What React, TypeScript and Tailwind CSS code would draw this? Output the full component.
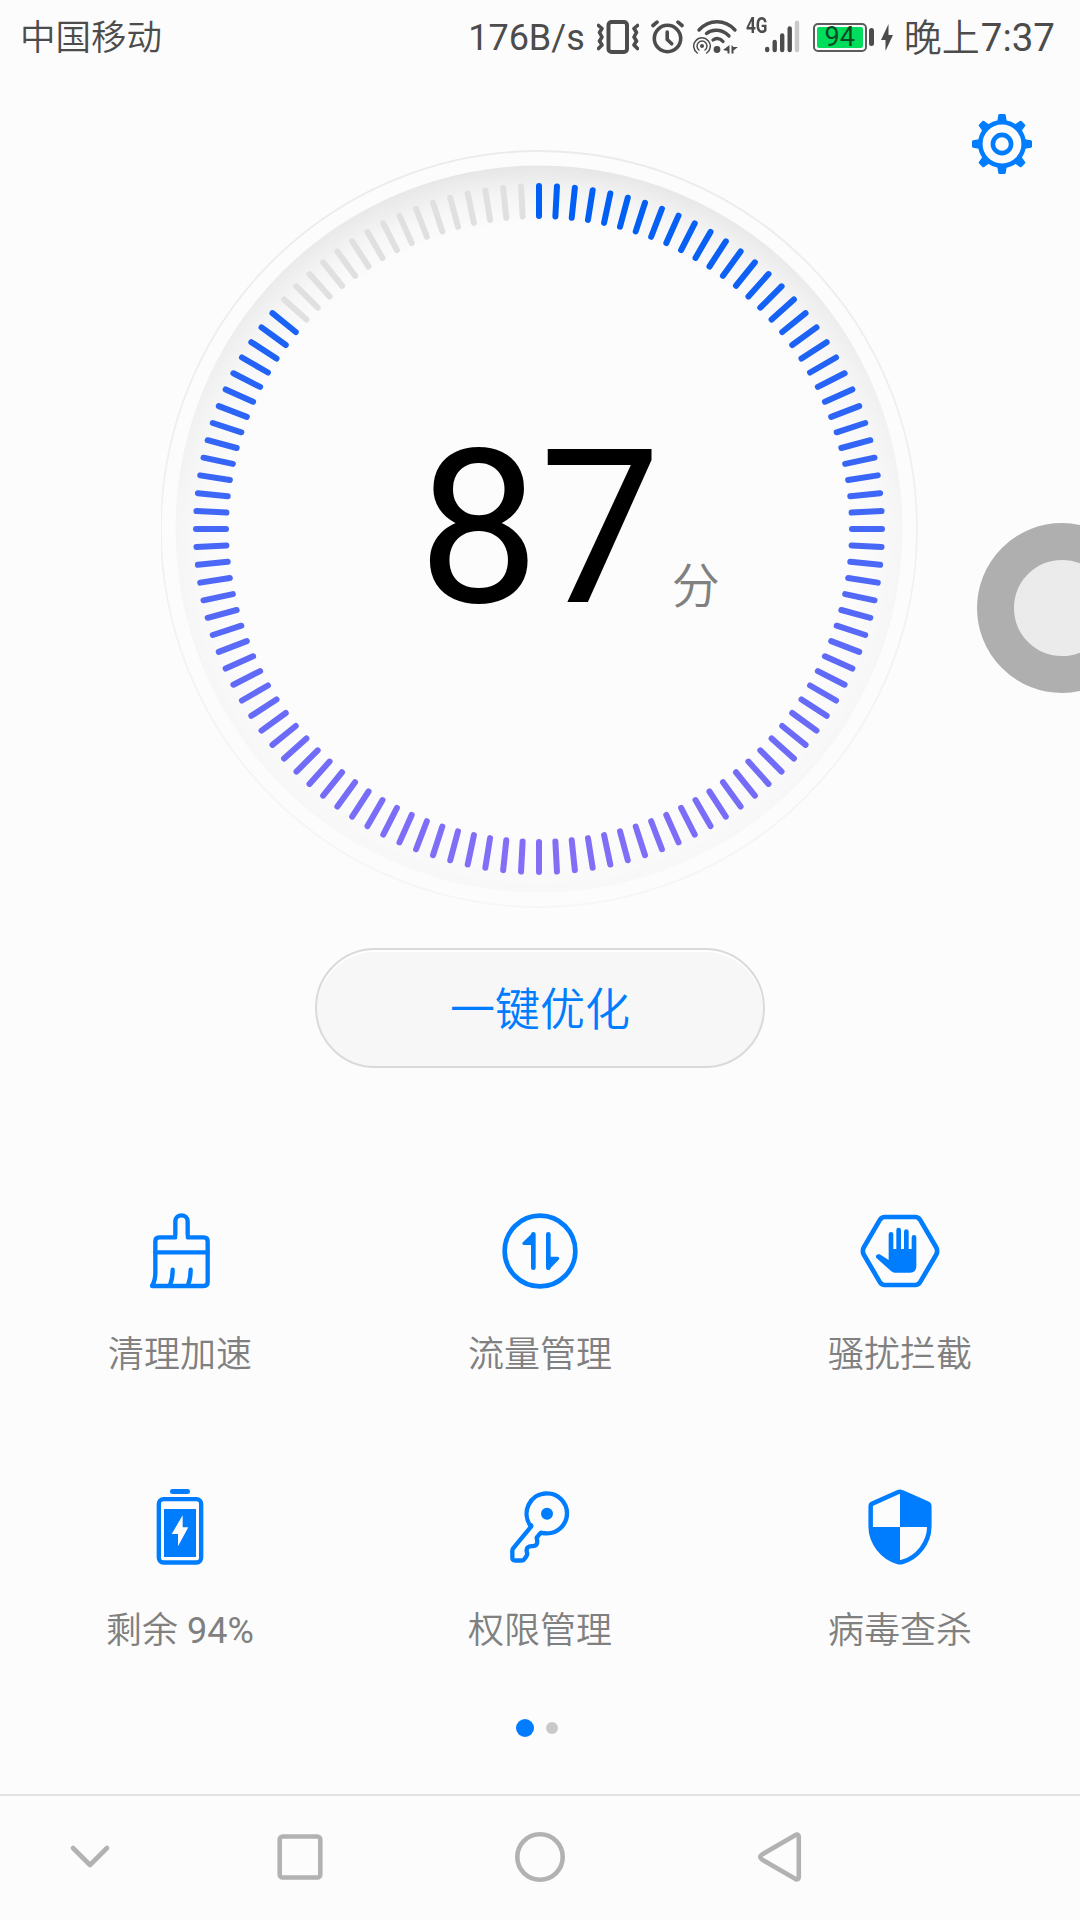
import type { ReactNode } from 'react';

const TICKS = 120;
const ACTIVE_TICKS = 104;

const BLUE = '#007dff';
const INK = '#4c4c4c';

function tickColor(index: number): string {
  // Vertical blend: blue on top, violet at the bottom
  const t = (1 - Math.cos((index * 2 * Math.PI) / TICKS)) / 2;
  const top = [0, 95, 244];
  const mid = [69, 103, 247];
  const bottom = [130, 110, 247];
  const [from, to, k] = t < 0.5 ? [top, mid, t * 2] : [mid, bottom, t * 2 - 1];
  const c = from.map((v, i) => Math.round(v + (to[i] - v) * k));
  return `rgb(${c[0]}, ${c[1]}, ${c[2]})`;
}

function VibrateIcon() {
  return (
    <svg className="ml-[12px] h-[34px] w-[42px]" viewBox="0 0 42 34" fill="none" stroke={INK}>
      <rect x="11.5" y="2" width="18.5" height="30" rx="3" strokeWidth="4" />
      <path d="M1.5 5.5l3.5 3-2.5 4 2.5 4.5-2.5 4 2.5 4-3.5 3.5" strokeWidth="3.6" strokeLinecap="round" strokeLinejoin="round" />
      <path d="M40.5 5.5l-3.5 3 2.5 4-2.5 4.5 2.5 4-2.5 4 3.5 3.5" strokeWidth="3.6" strokeLinecap="round" strokeLinejoin="round" />
    </svg>
  );
}

function AlarmIcon() {
  return (
    <svg className="ml-[12px] h-[34px] w-[33px]" viewBox="0 0 33 34" fill="none" stroke={INK} strokeLinecap="round" strokeLinejoin="round">
      <circle cx="16.5" cy="18.5" r="13.2" strokeWidth="3.6" />
      <path d="M16.2 12v7.5l4.5 4.3" strokeWidth="3.6" />
      <path d="M2 5.5L6 2.2M31 5.5L27 2.2" strokeWidth="3.6" />
    </svg>
  );
}

function WifiIcon() {
  return (
    <svg className="ml-[9px] h-[34px] w-[45px]" viewBox="0 0 45 34" fill="none" stroke={INK} strokeLinecap="round">
      <path d="M6 10C16 -1 32 -1 42 10" strokeWidth="3.4" />
      <path d="M13.5 13.5C19 8.8 29 8.8 36 16" strokeWidth="3.4" />
      <path d="M20 20c3-2.2 7-2 10 1.5" strokeWidth="3.4" />
      <circle cx="24" cy="29.5" r="3.4" fill={INK} stroke="none" />
      <circle cx="9" cy="26" r="2" fill={INK} stroke="none" />
      <path d="M6 30a5 5 0 1 1 6 0" strokeWidth="1.5" />
      <path d="M4.3 33a8.3 8.3 0 1 1 9.4 0" strokeWidth="1.5" />
      <path d="M36.5 25v8.500h-2v-2.500l-4.500-1zM38.500 25v8.500h2v-3l4.500-3.500h-4.500z" fill={INK} stroke="none" />
    </svg>
  );
}

function SignalIcon() {
  return (
    <svg className="h-[34px] w-[35px]" viewBox="0 0 35 34" strokeWidth="4.4" strokeLinecap="round">
      <path d="M2.2 29v1M9.7 22v8M17.2 15.5v14.5M24.7 8.5v21.5" stroke={INK} />
      <path d="M32 2.7v27.3" stroke="#c9c9c9" />
    </svg>
  );
}

function StatusBar() {
  return (
    <header className="flex h-[74px] items-center justify-between pr-[25px] pl-5 text-4xl leading-none text-[#4c4c4c]">
      <span className="pt-[4px] text-[35.5px] font-[350]">中国移动</span>
      <div className="flex items-center">
        <span className="pt-px">176B/s</span>
        <VibrateIcon />
        <AlarmIcon />
        <WifiIcon />
        <span className="mb-[22px] ml-[8px] w-[19px] origin-left scale-x-[0.78] text-[22px] font-bold leading-none">4G</span>
        <SignalIcon />
        <div className="ml-[13px] flex h-[29px] w-[54px] items-center justify-center rounded-[5px] border-2 border-[#5c5c5c] p-[2px]">
          <div className="flex h-full w-full items-center justify-center rounded-[2px] bg-[#00dc5c] text-[27px] leading-none text-[#0d4a24]">94</div>
        </div>
        <div className="ml-[2px] h-[18px] w-[5px] rounded-full bg-[#4c4c4c]" />
        <svg className="ml-[7px] h-[27px] w-[12px]" viewBox="0 0 12 27">
          <path d="M7.5 0v11H12L4.5 27V16H0z" fill={INK} />
        </svg>
        <span className="ml-[11px] pt-[2px] text-[38px] font-[350]">晚上</span>
        <span className="pt-[2px] pl-px text-[38.5px]">7:37</span>
      </div>
    </header>
  );
}

function GearIcon() {
  return (
    <svg className="h-[60px] w-[60px]" viewBox="-30 -30 60 60">
      {[0, 45, 90, 135, 180, 225, 270, 315].map((a) => (
        <path key={a} transform={`rotate(${a})`} d="M-6.5 -21L-4.7 -23L-3.7 -29Q-3.4 -30 -2.4 -30H2.4Q3.4 -30 3.7 -29L4.7 -23L6.5 -21z" fill={BLUE} />
      ))}
      <circle r="21.7" fill="none" stroke={BLUE} strokeWidth="4.6" />
      <circle r="9.1" fill="none" stroke={BLUE} strokeWidth="4.6" />
    </svg>
  );
}

function ScoreDial() {
  return (
    <div className="relative mx-auto h-[758px] w-[758px]">
      <svg className="h-full w-full" viewBox="-378 -379 758 758">
        <defs>
          <radialGradient id="rim" cx="0" cy="0" r="363.5" gradientUnits="userSpaceOnUse">
            <stop offset="0.84" stopColor="#000" stopOpacity="0" />
            <stop offset="0.92" stopColor="#000" stopOpacity="0.03" />
            <stop offset="1" stopColor="#000" stopOpacity="0.085" />
          </radialGradient>
          <linearGradient id="fade" x1="0" y1="-364" x2="0" y2="364" gradientUnits="userSpaceOnUse">
            <stop offset="0" stopColor="#fff" />
            <stop offset="0.5" stopColor="#fff" stopOpacity="0.3" />
            <stop offset="1" stopColor="#fff" stopOpacity="0.2" />
          </linearGradient>
          <linearGradient id="ring" x1="0" y1="-378" x2="0" y2="378" gradientUnits="userSpaceOnUse">
            <stop offset="0" stopColor="#ebebeb" />
            <stop offset="1" stopColor="#f6f6f6" />
          </linearGradient>
          <mask id="rimMask" maskUnits="userSpaceOnUse" x="-378" y="-378" width="757" height="757">
            <rect x="-378" y="-378" width="757" height="757" fill="url(#fade)" />
          </mask>
        </defs>
        <circle r="378" fill="none" stroke="url(#ring)" strokeWidth="1.8" />
        <circle r="363.5" fill="url(#rim)" mask="url(#rimMask)" />
        {Array.from({ length: TICKS }, (_, i) => (
          <line
            key={i}
            y1="-343"
            y2="-313"
            stroke={i < ACTIVE_TICKS ? tickColor(i) : '#e0e0e0'}
            strokeWidth="6"
            strokeLinecap="round"
            transform={`rotate(${(i * 360) / TICKS})`}
          />
        ))}
      </svg>
      <div className="absolute inset-0 flex items-baseline pt-[271px] pl-[257px]">
        <span className="text-[216px] leading-[216px] text-black">87</span>
        <span className="ml-[11px] translate-y-px text-[48px] leading-none font-[350] text-[#808080]">分</span>
      </div>
    </div>
  );
}

function BrushIcon() {
  return (
    <g fill="none" stroke={BLUE} strokeWidth="13" strokeLinecap="round" strokeLinejoin="round">
      <path d="M106 79V31c0-24 37-24 37 0v48h48q12 0 12 12v122q0 12-12 12H36c8-13 10-25 10-40V91q0-12 12-12z" />
      {/* The handle opens into the head */}
      <path d="M112.5 79h24" stroke="#fcfcfc" strokeLinecap="butt" />
      <path d="M46 124h157" />
      <path d="M98 176c0 18-1 28-7 43M152 176c0 18-1 28-7 43" />
    </g>
  );
}

function TrafficIcon() {
  return (
    <g fill="none" stroke={BLUE} strokeWidth="14" strokeLinecap="round" strokeLinejoin="round">
      <circle cx="120" cy="120" r="106" />
      <path d="M100 70v100M145 70v100" />
      <path d="M100 70L72 97h28zM145 171l28-29h-28z" strokeWidth="10" fill={BLUE} />
    </g>
  );
}

function BlockIcon() {
  return (
    <g>
      <path
        d="M74 18h92q9 0 14 8l48 82q7 12 0 24l-48 82q-5 8-14 8H74q-9 0-14-8l-48-82q-7-12 0-24l48-82q5-8 14-8z"
        fill="none"
        stroke={BLUE}
        strokeWidth="14"
      />
      <path
        d="M86 70q0-7 7-7t7 7v44h9V57q0-7 7-7t7 7v57h9V62q0-7 7-7t7 7v52h9V79q0-7 7-7t7 7v86q0 20-20 20h-44q-7 0-12-5L50 142q-4-4-1-9 4-5 10-3l27 17z"
        fill={BLUE}
      />
    </g>
  );
}

function PowerIcon() {
  return (
    <g>
      <rect x="90" y="6" width="60" height="15" rx="7" fill={BLUE} />
      <rect x="56.5" y="36.5" width="127" height="190" rx="14" fill="none" stroke={BLUE} strokeWidth="13" />
      <rect x="72" y="66" width="96" height="144" fill={BLUE} />
      <path d="M128 85v36h17l-31 57v-37H95z" fill="#fcfcfc" />
    </g>
  );
}

function KeyIcon() {
  return (
    <g>
      <path
        d="M93 119C62 77 89 19 141 19a60 60 0 0 1 0 120q-9 0-15-1.500-3-1-5 1l-9 11q-3 3-1 7 4 21-13 21-10-1-15 4-5 6-2 15 2 7-3 13l-6 8q-2 3-7 3H45q-8 0-8-8v-21q0-4 3-8l52-63q3-3 1-6z"
        fill="none"
        stroke={BLUE}
        strokeWidth="13"
        strokeLinejoin="round"
      />
      <circle cx="141" cy="80" r="18" fill={BLUE} />
    </g>
  );
}

function ShieldIcon() {
  return (
    <g>
      <path d="M120 13L204 50v70H120zM120 120v106C70 210 34 170 32 120z" fill={BLUE} />
      <path
        d="M115 15q5-2 10 0l78 35q5 2 5 8v60c0 50-36 94-82 107q-6 2-12 0C68 212 32 168 32 118V58q0-6 5-8z"
        fill="none"
        stroke={BLUE}
        strokeWidth="13.5"
        strokeLinejoin="round"
      />
    </g>
  );
}

interface Tool {
  label: string;
  value?: string;
  icon: ReactNode;
}

const TOOLS: Tool[] = [
  { label: '清理加速', icon: <BrushIcon /> },
  { label: '流量管理', icon: <TrafficIcon /> },
  { label: '骚扰拦截', icon: <BlockIcon /> },
  { label: '剩余', value: ' 94%', icon: <PowerIcon /> },
  { label: '权限管理', icon: <KeyIcon /> },
  { label: '病毒查杀', icon: <ShieldIcon /> },
];

function NavBar() {
  return (
    <nav className="flex h-[126px] items-center border-t-2 border-[#e2e2e2]">
      <svg className="h-[60px] w-[1080px]" viewBox="0 0 1080 60" fill="none" stroke="#b2b2b2" strokeWidth="4.6" strokeLinecap="round" strokeLinejoin="round">
        <path d="M73 20L90 37L107 20" />
        <rect x="279.7" y="8.5" width="40.6" height="41" rx="3" />
        <circle cx="540" cy="29" r="22.7" />
        <path d="M796 6.8L762 26.5Q758.5 29 762 31.5L796 51.2Q798.8 52 798.8 49V9Q798.8 6 796 6.8z" />
      </svg>
    </nav>
  );
}

export default function App() {
  return (
    <div className="relative flex h-[1920px] w-[1080px] flex-col overflow-hidden bg-[#fcfcfc] font-['Roboto','Noto_Sans_CJK_SC',sans-serif] font-normal">
      <StatusBar />
      <div className="flex h-[76px] justify-end pt-[40px] pr-[48px]">
        <GearIcon />
      </div>
      <ScoreDial />

      <button className="mx-auto mt-[40px] flex h-[120px] w-[450px] items-center justify-center rounded-full border-2 border-[#dadada] bg-[#f7f7f7] pt-[4px] text-[45px] leading-none font-[350] text-[#007dff] shadow-[inset_0_2px_1px_#ffffff]">
        一键优化
      </button>

      <main className="mt-[143px] grid grid-cols-3 gap-y-[116px]">
        {TOOLS.map((tool) => (
          <div key={tool.label} className="flex h-[160px] flex-col items-center">
            <svg className="h-[80px] w-[80px] overflow-visible" viewBox="0 0 240 240">
              {tool.icon}
            </svg>
            <div className="mt-[46px] text-4xl leading-none whitespace-pre text-[#808080]">
              <span className="font-[350]">{tool.label}</span>
              {tool.value}
            </div>
          </div>
        ))}
      </main>

      {/* Page indicator */}
      <div className="mt-[72px] flex h-[18px] items-center gap-3 pl-[516px]">
        <div className="h-[18px] w-[18px] rounded-full bg-[#007dff]" />
        <div className="h-3 w-3 rounded-full bg-[#c9c9c9]" />
      </div>

      <div className="mt-auto">
        <NavBar />
      </div>

      {/* Floating assistant button, half off the right edge */}
      <div className="absolute top-[523px] left-[977px] h-[170px] w-[170px] rounded-full border-[37px] border-[#afafaf] bg-[#ebebeb]" />
    </div>
  );
}
